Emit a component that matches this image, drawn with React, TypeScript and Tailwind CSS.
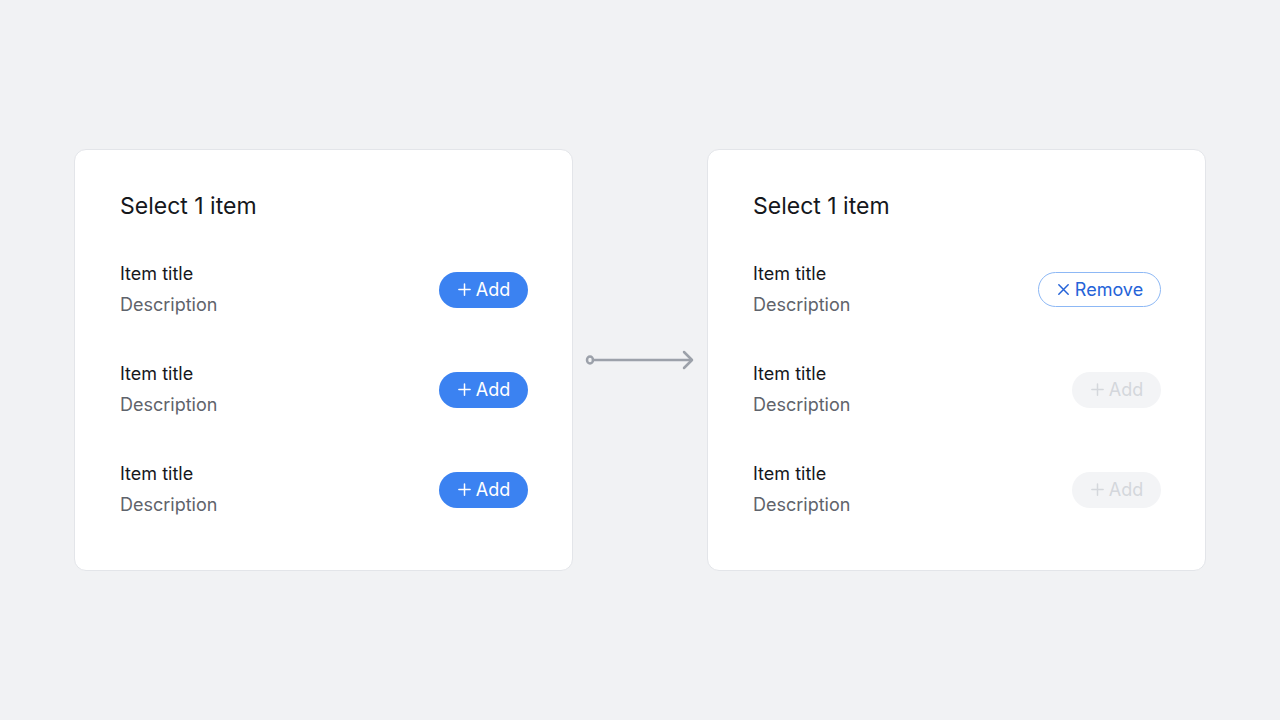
import React from "react";

type Mode = "add" | "remove" | "disabled";

function PlusIcon({ className }: { className?: string }) {
  return (
    <svg viewBox="0 0 16 16" className={className} fill="none" stroke="currentColor" strokeWidth={1.6} strokeLinecap="round">
      <path d="M8 2v12M2 8h12" />
    </svg>
  );
}

function XIcon({ className }: { className?: string }) {
  return (
    <svg viewBox="0 0 16 16" className={className} fill="none" stroke="currentColor" strokeWidth={1.6} strokeLinecap="round">
      <path d="M3 3l10 10M13 3L3 13" />
    </svg>
  );
}

function ActionButton({ mode }: { mode: Mode }) {
  if (mode === "remove") {
    return (
      <button className="flex h-[35px] w-[123px] items-center justify-center gap-[4px] rounded-full border border-[#8db8f5] bg-white text-[18px] text-[#2563d8]">
        <XIcon className="h-[15px] w-[15px]" />
        <span>Remove</span>
      </button>
    );
  }
  if (mode === "disabled") {
    return (
      <button className="flex h-[36px] w-[89px] items-center justify-center gap-[4px] rounded-full bg-[#f3f4f6] text-[18px] text-[#d4d7dc]">
        <PlusIcon className="h-[15px] w-[15px]" />
        <span>Add</span>
      </button>
    );
  }
  return (
    <button className="flex h-[36px] w-[89px] items-center justify-center gap-[4px] rounded-full bg-[#3b82f1] text-[18px] text-white">
      <PlusIcon className="h-[15px] w-[15px]" />
      <span>Add</span>
    </button>
  );
}

function Card({ modes }: { modes: Mode[] }) {
  return (
    <div className="flex w-[499px] flex-col rounded-[12px] border border-[#e3e5e9] bg-white pb-[53px] pl-[45px] pr-[44px] pt-[42px]">
      <h2 className="text-[23px] leading-[28px] text-[#15171c]">Select 1 item</h2>
      <div className="mt-[42px] flex flex-col gap-[45px]">
        {modes.map((m, i) => (
          <div key={i} className="flex items-center justify-between">
            <div className="flex flex-col gap-[7px]">
              <span className="text-[18px] leading-[24px] text-[#16181d]">Item title</span>
              <span className="text-[18px] leading-[24px] text-[#5f636b]">Description</span>
            </div>
            <ActionButton mode={m} />
          </div>
        ))}
      </div>
    </div>
  );
}

function Arrow() {
  return (
    <svg width="110" height="24" viewBox="0 0 110 24" fill="none" stroke="#9ca1aa" strokeWidth={2.5} strokeLinecap="round" strokeLinejoin="round">
      <ellipse cx="5" cy="12" rx="3" ry="3.5" />
      <path d="M8 12h98" />
      <path d="M99 4l8 8-8 8" />
    </svg>
  );
}

export default function App() {
  return (
    <div
      className="flex h-[720px] w-[1280px] items-center justify-center bg-[#f1f2f4]"
      style={{ fontFamily: "Inter, 'Noto Sans', sans-serif" }}
    >
      <div className="flex items-center gap-[12px]">
        <Card modes={["add", "add", "add"]} />
        <Arrow />
        <Card modes={["remove", "disabled", "disabled"]} />
      </div>
    </div>
  );
}
